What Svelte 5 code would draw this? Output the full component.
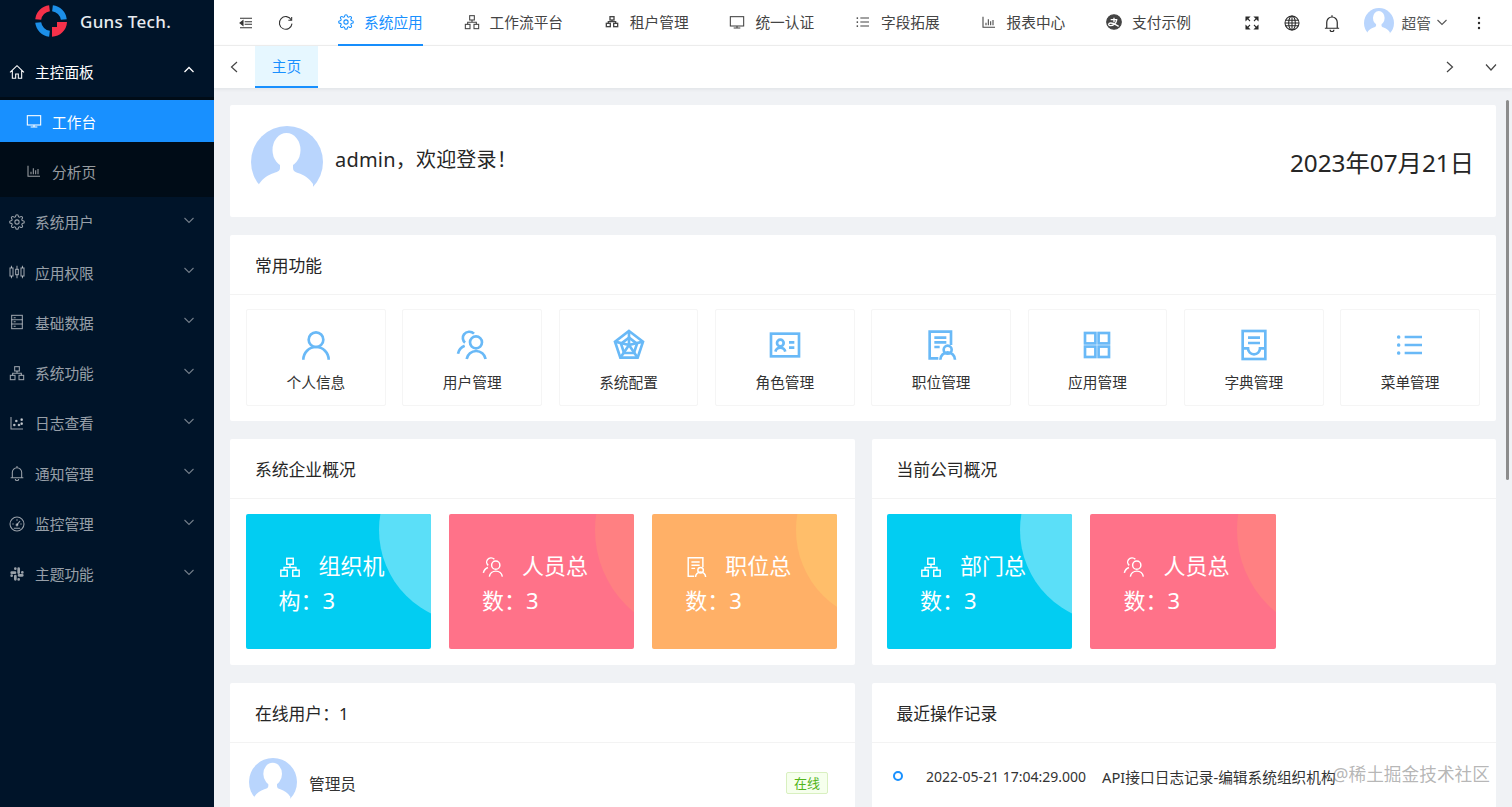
<script>
	const icons = {
		home: '<path d="M1.5 12.5 12 2.5l10.5 10M5 9.5V21.5h5V15h4v6.5h5V9.5"/>',
		desktop: '<rect x="2" y="4" width="20" height="14"/><path d="M12 18v3M7 21h10"/>',
		bar: '<path d="M3 4v16h18M7.5 17v-4M11 17V8M14.5 17v-6M18 17V9"/>',
		setting:
			'<circle cx="12" cy="12" r="3.2"/><path d="M19.4 15a1.65 1.65 0 0 0 .33 1.82l.06.06a2 2 0 0 1 0 2.83 2 2 0 0 1-2.83 0l-.06-.06a1.65 1.65 0 0 0-1.82-.33 1.65 1.65 0 0 0-1 1.51V21a2 2 0 0 1-2 2 2 2 0 0 1-2-2v-.09A1.65 1.65 0 0 0 9 19.4a1.65 1.65 0 0 0-1.82.33l-.06.06a2 2 0 0 1-2.83 0 2 2 0 0 1 0-2.83l.06-.06a1.65 1.65 0 0 0 .33-1.82 1.65 1.65 0 0 0-1.51-1H3a2 2 0 0 1-2-2 2 2 0 0 1 2-2h.09A1.65 1.65 0 0 0 4.6 9a1.65 1.65 0 0 0-.33-1.82l-.06-.06a2 2 0 0 1 0-2.83 2 2 0 0 1 2.83 0l.06.06a1.65 1.65 0 0 0 1.82.33H9a1.65 1.65 0 0 0 1-1.51V3a2 2 0 0 1 2-2 2 2 0 0 1 2 2v.09a1.65 1.65 0 0 0 1 1.51 1.65 1.65 0 0 0 1.82-.33l.06-.06a2 2 0 0 1 2.83 0 2 2 0 0 1 0 2.83l-.06.06a1.65 1.65 0 0 0-.33 1.82V9a1.65 1.65 0 0 0 1.51 1H21a2 2 0 0 1 2 2 2 2 0 0 1-2 2h-.09a1.65 1.65 0 0 0-1.51 1z"/>',
		sliders:
			'<rect x="1.5" y="6" width="4.5" height="12"/><rect x="10" y="8" width="4" height="8"/><rect x="18" y="6" width="4.5" height="12"/><path d="M3.7 2.5V6M3.7 18v3.5M12 2.5V8M12 16v5.5M20.2 2.5V6M20.2 18v3.5"/>',
		container: '<rect x="4" y="2" width="16" height="20"/><path d="M4 8.5h16M4 15h16M7 5.5h3M7 11.5h3M7 18.5h3"/>',
		cluster:
			'<rect x="8.5" y="2.5" width="7" height="6.5"/><rect x="2" y="15.5" width="7" height="6.5"/><rect x="15" y="15.5" width="7" height="6.5"/><path d="M12 9v3.5M5.5 15.5v-3h13v3"/>',
		tenant:
			'<g stroke-width="2"><rect x="9" y="4" width="6" height="5"/><rect x="3.5" y="14" width="6" height="5"/><rect x="14.5" y="14" width="6" height="5"/><path d="M12 9v2.5M6.5 14v-2.5h11V14"/></g>',
		dots:
			'<path d="M3 3v18h18"/><circle cx="8" cy="15" r="1.2" fill="currentColor"/><circle cx="11" cy="9" r="1.2" fill="currentColor"/><circle cx="15" cy="15" r="1.2" fill="currentColor"/><circle cx="19" cy="7" r="1.2" fill="currentColor"/><circle cx="19" cy="13" r="1.2" fill="currentColor"/>',
		bell: '<path d="M12 1.5V4M5 19v-8a7 7 0 0 1 14 0v8M2.5 19h19M9.5 21a2.5 2.5 0 0 0 5 0"/>',
		gauge:
			'<circle cx="12" cy="12" r="10.5"/><path d="M12 13 16.5 7.5"/><circle cx="12" cy="13.5" r="1.3"/><path d="M5 12h2M17 12h2M12 5v2M7.2 18.5h9.6"/>',
		slack:
			'<path stroke-width="4" stroke-linecap="round" d="M14.5 4v6M4 10h5M9.5 15v5M15 14h5M9.5 4v.1M20 9.5v.1M4 14.5v.1M14.5 20v.1"/>',
		list: '<path d="M8 6h13M8 12h13M8 18h13"/><path stroke-width="2.6" stroke-linecap="round" d="M3.5 6v.1M3.5 12v.1M3.5 18v.1"/>',
		alipay:
			'<circle cx="12" cy="12" r="11" fill="currentColor"/><path stroke="#fff" stroke-width="2" d="M7 8.5h10M12 5.5v7M16 9c-1 5-5 9-10 8.5-3-.5-2.5-4 1-4 3.5 0 7 2 12 5"/>',
		expand:
			'<path d="M9 9 5.5 5.5M15 9l3.5-3.5M9 15l-3.5 3.5M15 15l3.5 3.5"/><path fill="currentColor" d="M3 3h5L3 8zM21 3h-5l5 5zM3 21h5l-5-5zM21 21h-5l5-5z"/>',
		globe:
			'<circle cx="12" cy="12" r="10.5"/><ellipse cx="12" cy="12" rx="5" ry="10.5"/><path d="M12 1.5v21M2.5 8h19M2.5 16h19M1.5 12h21"/>',
		indent: '<path d="M3 5h18M10 10h11M10 14h11M3 19h18"/><path fill="currentColor" d="M7.5 8.5v7L3 12z"/>',
		reload: '<path d="M20 7.5A9.5 9.5 0 1 0 21 13"/><path d="M20.5 3v5h-5"/>',
		user: '<circle cx="12" cy="8" r="5.5"/><path d="M2.5 23a9.5 9.5 0 0 1 19 0"/>',
		team:
			'<circle cx="15" cy="10" r="4.5"/><path d="M8 22.5a7.2 7.2 0 0 1 14.2 0M13.5 3.5A5 5 0 0 0 6 4c-1.5 2-1 4.8.8 6.2M1.5 18.5a8 8 0 0 1 5-6"/>',
		radar:
			'<path d="M12 1.5 22.5 9.5 18.5 21.5H5.5L1.5 9.5z"/><path d="M12 6.5l6 4.5-2.3 7H8.300L6 11z"/><path d="M12 1.5V12M22.5 9.5 12 12M18.5 21.5 12 12M5.5 21.5 12 12M1.5 9.5 12 12"/>',
		idcard:
			'<rect x="1.5" y="3.5" width="21" height="17"/><circle cx="8.5" cy="10.5" r="2.5"/><path d="M4.8 17a3.8 3.8 0 0 1 7.4 0M15 10h4M15 14h4"/>',
		solution:
			'<path d="M19.5 12V2H3.5v20h6.5M7 6.5h9M7 10h9M7 13.5h4"/><circle cx="17" cy="15.5" r="3"/><path d="M11.5 23a5.5 5.5 0 0 1 11 0"/>',
		appstore:
			'<rect x="3" y="3" width="7.8" height="7.8"/><rect x="13.2" y="3" width="7.8" height="7.8"/><rect x="3" y="13.2" width="7.8" height="7.8"/><rect x="13.2" y="13.2" width="7.8" height="7.8"/>',
		dict: '<rect x="3.5" y="1.5" width="17" height="21"/><path d="M7.5 6.5h9M7.5 10.5h9M3.5 14.5h4a4.5 4.5 0 0 0 9 0h4"/>'
	};

	const sideMenus = [
		{ icon: 'setting', label: '系统用户' },
		{ icon: 'sliders', label: '应用权限' },
		{ icon: 'container', label: '基础数据' },
		{ icon: 'cluster', label: '系统功能' },
		{ icon: 'dots', label: '日志查看' },
		{ icon: 'bell', label: '通知管理' },
		{ icon: 'gauge', label: '监控管理' },
		{ icon: 'slack', label: '主题功能' }
	];

	const topMenus = [
		{ icon: 'setting', label: '系统应用', active: true },
		{ icon: 'cluster', label: '工作流平台' },
		{ icon: 'tenant', label: '租户管理' },
		{ icon: 'desktop', label: '统一认证' },
		{ icon: 'list', label: '字段拓展' },
		{ icon: 'bar', label: '报表中心' },
		{ icon: 'alipay', label: '支付示例' }
	];

	const shortcuts = [
		{ icon: 'user', label: '个人信息' },
		{ icon: 'team', label: '用户管理' },
		{ icon: 'radar', label: '系统配置' },
		{ icon: 'idcard', label: '角色管理' },
		{ icon: 'solution', label: '职位管理' },
		{ icon: 'appstore', label: '应用管理' },
		{ icon: 'dict', label: '字典管理' },
		{ icon: 'list', label: '菜单管理' }
	];

	const systemStats = [
		{ icon: 'cluster', text: '组织机构：3', tone: 'blue' },
		{ icon: 'team', text: '人员总数：3', tone: 'red' },
		{ icon: 'solution', text: '职位总数：3', tone: 'orange' }
	];

	const companyStats = [
		{ icon: 'cluster', text: '部门总数：3', tone: 'blue' },
		{ icon: 'team', text: '人员总数：3', tone: 'red' }
	];
</script>

{#snippet icon(name, size)}
	<svg
		class="icon"
		width={size}
		height={size}
		viewBox="0 0 24 24"
		fill="none"
		stroke="currentColor"
		stroke-width="1.6"
	>
		{@html icons[name]}
	</svg>
{/snippet}

{#snippet chevron()}
	<svg class="chevron" width="10" height="10" viewBox="0 0 10 10" fill="none" stroke="currentColor" stroke-width="1.1">
		<path d="M.5 3 5 7.5 9.5 3" />
	</svg>
{/snippet}

{#snippet avatar(size)}
	<svg class="avatar" width={size} height={size} viewBox="0 0 72 72">
		<circle cx="36" cy="36" r="36" fill="#b9d5fd" />
		<g fill="#fff">
			<ellipse cx="35.5" cy="24" rx="14" ry="17" />
			<path d="M29 34h13v8c0 3 2 4 5 5 6 2 11 5 15 11v14H8V58c4-6 9-9 15-11 3-1 6-2 6-5z" />
		</g>
	</svg>
{/snippet}

{#snippet statCards(items)}
	<div class="stats">
		{#each items as s}
			<div class="stat {s.tone}">
				<span class="stat-circle"></span>
				<p class="stat-text"><span class="stat-icon">{@render icon(s.icon, 22)}</span>{s.text}</p>
			</div>
		{/each}
	</div>
{/snippet}

<div class="layout">
	<aside class="sider">
		<div class="logo">
			<svg width="32" height="32" viewBox="-16 -16 32 32" fill="none" stroke-width="6">
				<path stroke="#f5314a" d="M-12.8-1.500A13 13 0 0 1-1.500-12.8" />
				<path stroke="#1c8fe8" d="M1.500-12.8A13 13 0 0 1 12.8-1.500" />
				<path stroke="#1c8fe8" d="M-12.8 1.500A13 13 0 0 0-1.500 12.8" />
				<path stroke="none" fill="#f5314a" d="M1 1h15A15.500 15.500 0 0 1 1 15.800V6h5V1z" />
			</svg>
			<span>Guns Tech.</span>
		</div>

		<div class="side-item open">
			{@render icon('home', 16)}
			<span>主控面板</span>
			<svg class="chevron" width="10" height="10" viewBox="0 0 10 10" fill="none" stroke="currentColor" stroke-width="1.3">
				<path d="M.5 7 5 2.5 9.5 7" />
			</svg>
		</div>
		<div class="submenu">
			<div class="sub-item selected">
				{@render icon('desktop', 16)}
				<span>工作台</span>
			</div>
			<div class="sub-item">
				{@render icon('bar', 16)}
				<span>分析页</span>
			</div>
		</div>
		{#each sideMenus as m}
			<div class="side-item">
				{@render icon(m.icon, 16)}
				<span>{m.label}</span>
				{@render chevron()}
			</div>
		{/each}
	</aside>

	<main class="main">
		<header class="topbar">
			<div class="tools">
				{@render icon('indent', 16)}
				{@render icon('reload', 16)}
			</div>
			<nav class="top-menu">
				{#each topMenus as m}
					<div class="top-item" class:active={m.active}>
						{@render icon(m.icon, 16)}
						<span>{m.label}</span>
					</div>
				{/each}
			</nav>
			<div class="top-right">
				{@render icon('expand', 16)}
				{@render icon('globe', 16)}
				<span class="top-bell">{@render icon('bell', 18)}</span>
				<div class="me">
					{@render avatar(30)}
					<span>超管</span>
					{@render chevron()}
				</div>
				<svg class="more" width="16" height="16" viewBox="0 0 16 16" fill="currentColor">
					<circle cx="8" cy="3" r="1.2" /><circle cx="8" cy="8" r="1.2" /><circle cx="8" cy="13" r="1.2" />
				</svg>
			</div>
		</header>

		<div class="tabs">
			<svg class="tab-arrow" width="10" height="12" viewBox="0 0 10 12" fill="none" stroke="currentColor" stroke-width="1.2">
				<path d="M8 1 2.5 6 8 11" />
			</svg>
			<div class="tab">主页</div>
			<svg class="tab-arrow right" width="10" height="12" viewBox="0 0 10 12" fill="none" stroke="currentColor" stroke-width="1.2">
				<path d="M2 1 7.5 6 2 11" />
			</svg>
			<svg class="tab-down" width="12" height="12" viewBox="0 0 12 12" fill="none" stroke="currentColor" stroke-width="1.2">
				<path d="M1 3.5 6 9l5-5.5" />
			</svg>
		</div>

		<div class="content">
			<section class="card welcome">
				{@render avatar(72)}
				<span class="hello">admin，欢迎登录！</span>
				<span class="date">2023年07月21日</span>
			</section>

			<section class="card">
				<h3 class="card-title">常用功能</h3>
				<div class="shortcuts">
					{#each shortcuts as s}
						<div class="shortcut">
							<span class="shortcut-icon">{@render icon(s.icon, 32)}</span>
							<span>{s.label}</span>
						</div>
					{/each}
				</div>
			</section>

			<div class="row">
				<section class="card">
					<h3 class="card-title">系统企业概况</h3>
					{@render statCards(systemStats)}
				</section>
				<section class="card">
					<h3 class="card-title">当前公司概况</h3>
					{@render statCards(companyStats)}
				</section>
			</div>

			<div class="row">
				<section class="card tall">
					<h3 class="card-title">在线用户：1</h3>
					<div class="online">
						{@render avatar(48)}
						<span class="online-name">管理员</span>
						<span class="tag">在线</span>
					</div>
				</section>
				<section class="card tall">
					<h3 class="card-title">最近操作记录</h3>
					<div class="log">
						<span class="log-dot"></span>
						<span class="log-time">2022-05-21 17:04:29.000</span>
						<span>API接口日志记录-编辑系统组织机构</span>
					</div>
				</section>
			</div>
			<span class="scroll-thumb"></span>
		</div>
	</main>

	<span class="watermark">@稀土掘金技术社区</span>
</div>

<style>
	:global(body) {
		overflow: hidden;
		font-family: 'Noto Sans', 'Noto Sans CJK SC', sans-serif;
		font-size: 14.7px;
		color: #333;
	}

	.layout {
		position: relative;
		display: flex;
		height: 807px;
		overflow: hidden;
	}

	.icon {
		flex: none;
		display: block;
	}

	.sider {
		flex: none;
		width: 214px;
		background: #001429;
		color: rgba(255, 255, 255, 0.6);
	}

	.logo {
		display: flex;
		align-items: center;
		gap: 13px;
		height: 47px;
		padding: 0 0 5px 35px;
		box-sizing: border-box;
		color: #e8ecf0;
		font-size: 17px;
		font-weight: 500;
		letter-spacing: 0.3px;
	}

	.side-item {
		display: flex;
		align-items: center;
		height: 50.3px;
		padding-left: 9px;
		box-sizing: border-box;
	}

	.side-item.open {
		height: 50px;
		padding-bottom: 1px;
		color: #fff;
	}

	.side-item span {
		margin-left: 10px;
	}

	.side-item .chevron {
		margin-left: auto;
		margin-right: 20px;
		margin-top: -4px;
		opacity: 0.75;
	}

	.side-item.open .chevron {
		opacity: 1;
	}

	.submenu {
		height: 99.6px;
		padding-top: 3px;
		box-sizing: border-box;
		background: #000c17;
	}

	.sub-item {
		display: flex;
		align-items: center;
		gap: 10px;
		height: 42px;
		margin-bottom: 8px;
		padding-left: 26px;
	}

	.selected {
		background: #1890ff;
		color: #fff;
	}

	.main {
		flex: 1;
		min-width: 0;
		display: flex;
		flex-direction: column;
		background: #f0f2f5;
	}

	.topbar {
		display: flex;
		align-items: center;
		flex: none;
		height: 46px;
		padding-left: 24px;
		box-sizing: border-box;
		background: #fff;
		border-bottom: 1px solid #f0f0f0;
		color: #444;
	}

	.tools {
		display: flex;
		gap: 24px;
		color: #333;
	}

	.top-menu {
		display: flex;
		margin-left: 44px;
		gap: 40.8px;
	}

	.top-item {
		display: flex;
		align-items: center;
		gap: 10px;
		height: 46px;
		border-bottom: 2px solid transparent;
		box-sizing: border-box;
	}

	.top-item.active {
		color: #1890ff;
		border-bottom-color: #1890ff;
	}

	.top-right {
		display: flex;
		align-items: center;
		margin-left: auto;
		padding-right: 25px;
		gap: 24px;
		color: #2a2a2a;
	}

	.top-bell {
		margin: 0 -1px;
	}

	.me {
		display: flex;
		align-items: center;
		gap: 8px;
		color: #555;
	}

	.me .chevron {
		margin-left: -2px;
		margin-top: -2px;
	}

	.tabs {
		display: flex;
		align-items: center;
		flex: none;
		height: 42px;
		background: #fff;
		box-shadow: 0 1px 4px rgba(0, 21, 41, 0.08);
		position: relative;
		color: #444;
	}

	.tab-arrow {
		margin-left: 15px;
	}

	.tab {
		margin-left: 16px;
		width: 63px;
		height: 42px;
		line-height: 41px;
		text-align: center;
		box-sizing: border-box;
		background: #e6f7ff;
		color: #1890ff;
		border-bottom: 2px solid #1890ff;
	}

	.tab-arrow.right {
		margin-left: auto;
		margin-right: 30px;
	}

	.tab-down {
		margin-right: 15px;
	}

	.content {
		position: relative;
		flex: 1;
		min-height: 0;
		display: flex;
		flex-direction: column;
		gap: 18px;
		padding: 17px 16px 0;
	}

	.card {
		flex: none;
		background: #fff;
		border-radius: 2px;
	}

	.card-title {
		height: 60px;
		margin: 0;
		padding: 1px 25px 0;
		line-height: 60px;
		box-sizing: border-box;
		font-size: 16.8px;
		font-weight: 400;
		color: #262626;
		border-bottom: 1px solid #f3f3f3;
	}

	.welcome {
		display: flex;
		align-items: center;
		height: 112px;
		padding: 0 22px 0 21px;
		box-sizing: border-box;
	}

	.welcome .avatar {
		margin-top: 2px;
	}

	.hello {
		margin-left: 12px;
		margin-top: -6px;
		font-size: 20px;
		color: #262626;
		letter-spacing: 0.2px;
	}

	.date {
		margin-left: auto;
		font-size: 24.3px;
		color: #262626;
	}

	.shortcuts {
		display: grid;
		grid-template-columns: repeat(8, 1fr);
		gap: 16.5px;
		padding: 14px 16px 15px;
	}

	.shortcut {
		display: flex;
		flex-direction: column;
		align-items: center;
		height: 97px;
		padding-top: 19px;
		box-sizing: border-box;
		border: 1px solid #f5f5f5;
		border-radius: 2px;
		color: #333;
	}

	.shortcut-icon {
		color: #69b9f7;
		margin-bottom: 10px;
	}

	.shortcut-icon .icon {
		stroke-width: 2;
	}

	.row {
		display: grid;
		grid-template-columns: 1fr 1fr;
		gap: 17px;
		flex: none;
	}

	.stats {
		display: flex;
		gap: 18px;
		padding: 15px 16px 16px 15.6px;
	}

	.stat {
		position: relative;
		overflow: hidden;
		flex: none;
		width: 185.3px;
		height: 135px;
		padding: 34px 33px 0;
		box-sizing: border-box;
		border-radius: 2px;
		color: #fff;
	}

	.stat-circle {
		position: absolute;
		top: -77px;
		right: -134px;
		width: 186px;
		height: 186px;
		border-radius: 50%;
	}

	.stat-text {
		position: relative;
		margin: 0;
		font-size: 22px;
		line-height: 35px;
	}

	.stat-icon {
		display: inline-block;
		margin-right: 18px;
		vertical-align: -4px;
	}

	.blue {
		background: #02cdf2;
	}

	.blue .stat-circle {
		background: #5bdff8;
	}

	.red {
		background: #ff7289;
	}

	.red .stat-circle {
		top: -90px;
		right: -173px;
		width: 212px;
		height: 212px;
		background: #ff8082;
	}

	.orange {
		background: #ffb067;
	}

	.orange .stat-circle {
		top: -77px;
		right: -145px;
		width: 186px;
		height: 186px;
		background: #ffbe6a;
	}

	.tall {
		height: 200px;
	}

	.online {
		display: flex;
		align-items: flex-start;
		padding: 15px 27px 0 19px;
	}

	.online-name {
		margin-left: 12px;
		margin-top: 14px;
		font-size: 15.7px;
		color: #333;
	}

	.tag {
		margin-left: auto;
		margin-top: 14px;
		padding: 0 6.5px;
		line-height: 20px;
		font-size: 13px;
		color: #52b41a;
		background: #f6ffed;
		border: 1px solid #d9f0c0;
		border-radius: 2px;
	}

	.log {
		display: flex;
		align-items: center;
		height: 66px;
		padding-left: 21px;
		color: #333;
	}

	.log-dot {
		flex: none;
		width: 10px;
		height: 10px;
		box-sizing: border-box;
		border: 2px solid #1890ff;
		border-radius: 50%;
		background: #fff;
	}

	.log-time {
		margin: 0 16px 0 23.5px;
		font-size: 14px;
	}

	.scroll-thumb {
		position: absolute;
		right: 3px;
		top: 12px;
		width: 3px;
		height: 380px;
		background: #8c8c8c;
		border-radius: 2px;
	}

	.watermark {
		position: absolute;
		right: 22px;
		bottom: 21px;
		font-size: 17.7px;
		color: rgba(120, 120, 120, 0.55);
	}
</style>
